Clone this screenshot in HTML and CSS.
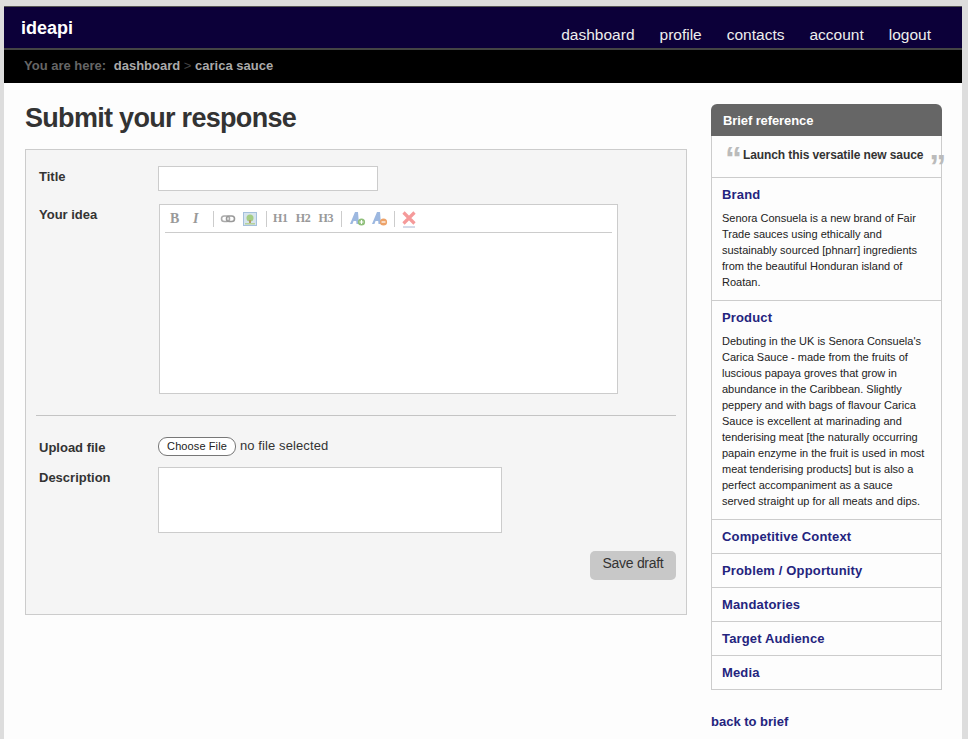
FILE: index.html
```html
<!DOCTYPE html>
<html lang="en">
<head>
    <meta charset="UTF-8">
    <title>Submit your response</title>
    <link rel="stylesheet" href="styles.css">
</head>
<body>
    <div class="page">
        <div class="header">
            <a class="logo" href="#">ideapi</a>
            <div class="nav">
                <a href="#">dashboard</a>
                <a href="#">profile</a>
                <a href="#">contacts</a>
                <a href="#">account</a>
                <a href="#">logout</a>
            </div>
        </div>
        <div class="crumbs">
            <span class="crumbs-label">You are here:</span>
            <a href="#">dashboard</a>
            <span class="crumbs-sep">&gt;</span>
            <a href="#">carica sauce</a>
        </div>
        <div class="content">
            <div class="main">
                <h1>Submit your response</h1>
                <form class="panel">
                    <div class="row row-title">
                        <label for="title">Title</label>
                        <input type="text" id="title" class="field-title">
                    </div>
                    <div class="row row-idea">
                        <label>Your idea</label>
                        <div class="editor">
                            <div class="toolbar">
                                <span class="tool tool-b">B</span>
                                <span class="tool tool-i">I</span>
                                <span class="tool-sep sep-a"></span>
                                <svg class="icon" width="16" height="16" viewBox="0 0 16 16">
                                    <rect x="1.5" y="5" width="8" height="5.5" rx="2.7" fill="none" stroke="#aaa" stroke-width="1.6"/>
                                    <rect x="6.5" y="5" width="8" height="5.5" rx="2.7" fill="none" stroke="#999" stroke-width="1.6"/>
                                </svg>
                                <svg class="icon icon-pic" width="16" height="16" viewBox="0 0 16 16">
                                    <rect x="1.5" y="1.5" width="13" height="13" fill="#d6e4ee" stroke="#a4c0dc"/>
                                    <circle cx="8" cy="7" r="3.5" fill="#a5cd85"/>
                                    <rect x="7" y="9" width="2" height="3" fill="#b59a6a"/>
                                    <rect x="3" y="12" width="10" height="1.5" fill="#b5d29a"/>
                                </svg>
                                <span class="tool-sep sep-b"></span>
                                <span class="tool tool-h">H1</span>
                                <span class="tool tool-h">H2</span>
                                <span class="tool tool-h">H3</span>
                                <span class="tool-sep sep-c"></span>
                                <svg class="icon" width="18" height="16" viewBox="0 0 18 16">
                                    <path d="M1 13 L6 1 H9 L10 13 H7.5 L7.2 10 H4.6 L3.4 13 Z" fill="#9db8e0"/>
                                    <circle cx="12.5" cy="11" r="3.6" fill="#8fbf7a"/>
                                    <path d="M10.5 11 H14.5 M12.5 9 V13" stroke="#fff" stroke-width="1.2"/>
                                </svg>
                                <svg class="icon icon-minus" width="18" height="16" viewBox="0 0 18 16">
                                    <path d="M1 13 L6 1 H9 L10 13 H7.5 L7.2 10 H4.6 L3.4 13 Z" fill="#9db8e0"/>
                                    <circle cx="12.5" cy="11" r="3.6" fill="#eda268"/>
                                    <path d="M10.5 11 H14.5" stroke="#fff" stroke-width="1.2"/>
                                </svg>
                                <span class="tool-sep sep-d"></span>
                                <svg class="icon icon-x" width="16" height="18" viewBox="0 0 16 18">
                                    <path d="M2.5 2.5 L13.5 13.5 M13.5 2.5 L2.5 13.5" stroke="#f59a9a" stroke-width="3.2"/>
                                    <path d="M2 17 H14" stroke="#a9b4d0" stroke-width="1"/>
                                </svg>
                            </div>
                        </div>
                    </div>
                    <hr class="divider">
                    <div class="row row-upload">
                        <label>Upload file</label>
                        <div class="file">
                            <span class="file-btn">Choose File</span>
                            <span class="file-name">no file selected</span>
                        </div>
                    </div>
                    <div class="row row-desc">
                        <label for="description">Description</label>
                        <textarea id="description" class="field-desc"></textarea>
                    </div>
                    <div class="actions">
                        <button type="button" class="save">Save draft</button>
                    </div>
                </form>
            </div>
            <div class="side">
                <div class="side-head">Brief reference</div>
                <div class="side-box">
                    <div class="quote">
                        <span class="quote-open">&ldquo;</span>
                        <span class="quote-text">Launch this versatile new sauce</span>
                        <span class="quote-close">&rdquo;</span>
                    </div>
                    <div class="item">
                        <h3>Brand</h3>
                        <p>Senora Consuela is a new brand of Fair<br>Trade sauces using ethically and<br>sustainably sourced [phnarr] ingredients<br>from the beautiful Honduran island of<br>Roatan.</p>
                    </div>
                    <div class="item">
                        <h3>Product</h3>
                        <p>Debuting in the UK is Senora Consuela's<br>Carica Sauce - made from the fruits of<br>luscious papaya groves that grow in<br>abundance in the Caribbean. Slightly<br>peppery and with bags of flavour Carica<br>Sauce is excellent at marinading and<br>tenderising meat [the naturally occurring<br>papain enzyme in the fruit is used in most<br>meat tenderising products] but is also a<br>perfect accompaniment as a sauce<br>served straight up for all meats and dips.</p>
                    </div>
                    <div class="item"><h3>Competitive Context</h3></div>
                    <div class="item"><h3>Problem / Opportunity</h3></div>
                    <div class="item"><h3>Mandatories</h3></div>
                    <div class="item"><h3>Target Audience</h3></div>
                    <div class="item"><h3>Media</h3></div>
                </div>
                <a class="back" href="#">back to brief</a>
            </div>
        </div>
    </div>
</body>
</html>
```

FILE: styles.css
```css
html, body {
    margin: 0;
    padding: 0;
}

body {
    font-family: "Liberation Sans", Arial, sans-serif;
    background-color: #dddddd;
    color: #333;
    height: 739px;
    overflow: hidden;
}

a {
    text-decoration: none;
}

.page {
    width: 958px;
    height: 733px;
    margin: 6px 0 0 4px;
    background-color: #fdfdfd;
    overflow: hidden;
}

.header {
    display: flex;
    justify-content: space-between;
    height: 41px;
    background-color: #0c0039;
    border-top: 1px solid #555;
    border-bottom: 2px solid #444;
}

.logo {
    color: #fff;
    font-size: 18px;
    font-weight: bold;
    margin: 11px 0 0 17px;
}

.nav {
    display: flex;
    gap: 25px;
    margin: 19px 31px 0 0;
}

.nav a {
    color: #eee;
    font-size: 15.5px;
}

.crumbs {
    height: 33px;
    line-height: 32px;
    padding-left: 20px;
    background-color: #000;
    font-size: 13px;
    font-weight: bold;
}

.crumbs-label {
    color: #666;
    margin-right: 4px;
}

.crumbs a {
    color: #aaa;
}

.crumbs-sep {
    color: #444;
    font-weight: normal;
}

.content {
    display: flex;
    align-items: flex-start;
    padding: 21px 20px 0 21px;
}

.main {
    width: 662px;
    margin-right: 24px;
}

h1 {
    margin: 0 0 16px;
    color: #333;
    font-size: 27px;
    line-height: 29px;
    letter-spacing: -0.7px;
}

.panel {
    height: 466px;
    box-sizing: border-box;
    padding: 16px 10px 0 10px;
    background-color: #f5f5f5;
    border: 1px solid #ccc;
}

.row {
    display: flex;
    align-items: flex-start;
}

.row label {
    width: 119px;
    padding-left: 3px;
    font-size: 13px;
    font-weight: bold;
    flex-shrink: 0;
}

.row-title label {
    padding-top: 3px;
}

.field-title {
    width: 220px;
    height: 25px;
    box-sizing: border-box;
    border: 1px solid #ccc;
    background: #fff;
    margin: 0;
}

.row-idea {
    margin-top: 13px;
}

.row-idea label {
    padding-top: 3px;
}

.editor {
    width: 459px;
    height: 190px;
    box-sizing: border-box;
    margin-left: 1px;
    padding: 0 5px;
    background: #fff;
    border: 1px solid #ccc;
}

.toolbar {
    display: flex;
    align-items: center;
    height: 27px;
    border-bottom: 1px solid #ccc;
}

.tool {
    color: #999;
    font-family: "Liberation Serif", serif;
    font-weight: bold;
    font-size: 14px;
}

.tool-b {
    width: 14px;
    margin-left: 5px;
}

.tool-i {
    width: 14px;
    margin-left: 9px;
    font-style: italic;
}

.tool-h {
    font-size: 12px;
    margin-right: 8px;
    letter-spacing: -0.3px;
}

.tool-sep {
    width: 1px;
    height: 16px;
    background: #ccc;
}

.sep-a {
    margin: 0 6px 0 6px;
}

.icon {
    flex-shrink: 0;
}

.icon-pic {
    margin-left: 6px;
}

.sep-b {
    margin: 0 6px 0 8px;
}

.sep-c {
    margin: 0 7px 0 0;
}

.icon-minus {
    margin-left: 4px;
}

.sep-d {
    margin: 0 6px 0 5px;
}

.divider {
    height: 1px;
    margin: 21px 0 0 0;
    border: 0;
    background: #c4c4c4;
}

.row-upload {
    margin-top: 21px;
}

.row-upload label {
    padding-top: 3px;
}

.file {
    display: flex;
    align-items: center;
    font-size: 13px;
    letter-spacing: 0.1px;
}

.file-btn {
    box-sizing: border-box;
    width: 78px;
    height: 19px;
    line-height: 17px;
    text-align: center;
    font-size: 11px;
    color: #222;
    background: #fff;
    border: 1px solid #777;
    border-radius: 9px;
}

.file-name {
    margin: -2px 0 0 4px;
    color: #333;
}

.row-desc {
    margin-top: 11px;
}

.row-desc label {
    padding-top: 3px;
}

.field-desc {
    width: 344px;
    height: 66px;
    box-sizing: border-box;
    border: 1px solid #ccc;
    background: #fff;
    margin: 0;
    resize: none;
}

.actions {
    display: flex;
    justify-content: flex-end;
    margin-top: 18px;
}

.save {
    width: 86px;
    height: 29px;
    padding: 0 0 5px;
    font-family: inherit;
    font-size: 14px;
    letter-spacing: -0.3px;
    color: #333;
    background-color: #c8c8c8;
    border: none;
    border-radius: 5px;
}

.side {
    width: 231px;
}

.side-head {
    height: 32px;
    line-height: 33px;
    padding-left: 12px;
    color: #fff;
    font-size: 13px;
    font-weight: bold;
    letter-spacing: -0.1px;
    background-color: #666;
    border-radius: 6px 6px 0 0;
}

.side-box {
    border: 1px solid #ccc;
    border-top: none;
}

.quote {
    display: flex;
    height: 41px;
    font-size: 12px;
    font-weight: bold;
}

.quote-open,
.quote-close {
    color: #bbb;
    font-size: 34px;
    line-height: 34px;
    height: 20px;
    width: 15px;
}

.quote-open {
    margin: 5px 0 0 13px;
}

.quote-text {
    margin: 12px 0 0 3px;
    white-space: nowrap;
    letter-spacing: -0.1px;
}

.quote-close {
    margin: 13px 0 0 6px;
}

.item {
    padding: 9px 10px 9px 10px;
    border-top: 1px solid #ccc;
}

.item h3 {
    margin: 0;
    color: #24247e;
    font-size: 13px;
    line-height: 15px;
    letter-spacing: 0.15px;
}

.item p {
    margin: 8px 0 1px;
    color: #222;
    font-size: 11px;
    line-height: 16px;
    white-space: nowrap;
}

.back {
    display: block;
    margin-top: 24px;
    color: #24247e;
    font-size: 13px;
    font-weight: bold;
}
```
